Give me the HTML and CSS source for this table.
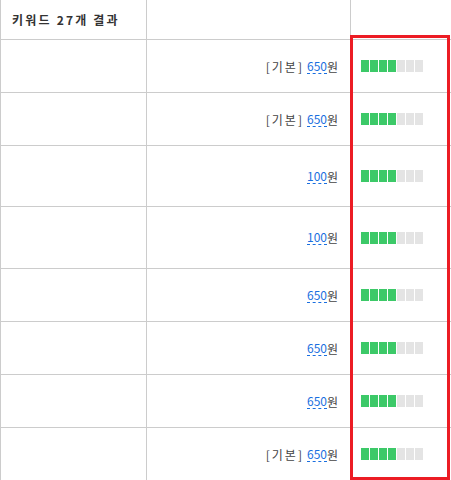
FILE: index.html
```html
<!DOCTYPE html>
<html>
<head>
	<meta charset="utf-8">
	<title>키워드 결과</title>
	<link rel="stylesheet" href="styles.css">
</head>
<body>
	<div class="list">
		<div class="row head">
			<div class="cell name">키워드 27개 결과</div>
			<div class="cell price"></div>
			<div class="cell level"></div>
		</div>
		<div class="row">
			<div class="cell name"></div>
			<div class="cell price"><span class="tag">[기본]</span> <span class="won">650</span>원</div>
			<div class="cell level"><div class="bar"><i class="on"></i><i class="on"></i><i class="on"></i><i class="on"></i><i></i><i></i><i></i></div></div>
		</div>
		<div class="row">
			<div class="cell name"></div>
			<div class="cell price"><span class="tag">[기본]</span> <span class="won">650</span>원</div>
			<div class="cell level"><div class="bar"><i class="on"></i><i class="on"></i><i class="on"></i><i class="on"></i><i></i><i></i><i></i></div></div>
		</div>
		<div class="row tall">
			<div class="cell name"></div>
			<div class="cell price"><span class="won">100</span>원</div>
			<div class="cell level"><div class="bar"><i class="on"></i><i class="on"></i><i class="on"></i><i class="on"></i><i></i><i></i><i></i></div></div>
		</div>
		<div class="row taller">
			<div class="cell name"></div>
			<div class="cell price"><span class="won">100</span>원</div>
			<div class="cell level"><div class="bar"><i class="on"></i><i class="on"></i><i class="on"></i><i class="on"></i><i></i><i></i><i></i></div></div>
		</div>
		<div class="row">
			<div class="cell name"></div>
			<div class="cell price"><span class="won">650</span>원</div>
			<div class="cell level"><div class="bar"><i class="on"></i><i class="on"></i><i class="on"></i><i class="on"></i><i></i><i></i><i></i></div></div>
		</div>
		<div class="row">
			<div class="cell name"></div>
			<div class="cell price"><span class="won">650</span>원</div>
			<div class="cell level"><div class="bar"><i class="on"></i><i class="on"></i><i class="on"></i><i class="on"></i><i></i><i></i><i></i></div></div>
		</div>
		<div class="row">
			<div class="cell name"></div>
			<div class="cell price"><span class="won">650</span>원</div>
			<div class="cell level"><div class="bar"><i class="on"></i><i class="on"></i><i class="on"></i><i class="on"></i><i></i><i></i><i></i></div></div>
		</div>
		<div class="row">
			<div class="cell name"></div>
			<div class="cell price"><span class="tag">[기본]</span> <span class="won">650</span>원</div>
			<div class="cell level"><div class="bar"><i class="on"></i><i class="on"></i><i class="on"></i><i class="on"></i><i></i><i></i><i></i></div></div>
		</div>
		<div class="highlight"></div>
	</div>
</body>
</html>
```

FILE: styles.css
```css
* {
	margin: 0px;
	padding: 0px;
	box-sizing: border-box;
}
html, body {
	overflow: hidden;
}
body {
	font-family: "Noto Sans CJK KR", "Noto Sans", sans-serif;
	font-size: 12px;
	color: #444;
	background: #fff;
}
.list {
	position: relative;
	width: 451px;
}
.row {
	display: flex;
	height: 53px;
	border-bottom: 1px solid #ccc;
}
.row.head {
	height: 40px;
}
.row.tall {
	height: 61px;
}
.row.taller {
	height: 62px;
}
.cell {
	display: flex;
	align-items: center;
	border-right: 1px solid #ccc;
}
.cell.name {
	width: 147px;
	border-left: 1px solid #ccc;
	padding-left: 11px;
}
.head .cell.name {
	font-weight: bold;
	color: #333;
	letter-spacing: 2.2px;
	padding-bottom: 1px;
}
.cell.price {
	width: 204px;
	justify-content: flex-end;
	padding-right: 12px;
	color: #444;
}
.cell.price .tag {
	letter-spacing: 2px;
	margin-right: 3px;
}
.cell.price .won {
	color: #1a6fe0;
	border-bottom: 1px dashed #1a6fe0;
	line-height: 14px;
}
.cell.level {
	flex: 1;
	border-right: none;
	padding-left: 10px;
}
.bar {
	display: flex;
	gap: 1px;
}
.bar i {
	display: block;
	width: 8px;
	height: 12px;
	background: #e4e4e4;
}
.bar i.on {
	background: #3cc968;
}
.highlight {
	position: absolute;
	left: 350px;
	top: 35px;
	width: 100px;
	height: 445px;
	border: 3px solid #ec1c24;
}
```
